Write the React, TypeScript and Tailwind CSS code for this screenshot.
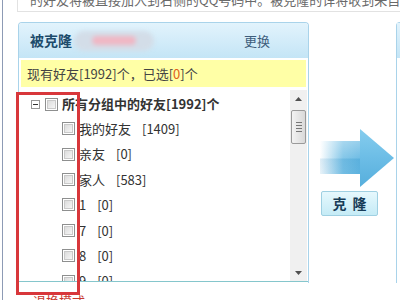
import React from "react";

const items: { name: string; count: string }[] = [
  { name: "我的好友", count: "[1409]" },
  { name: "亲友", count: "[0]" },
  { name: "家人", count: "[583]" },
  { name: "1", count: "[0]" },
  { name: "7", count: "[0]" },
  { name: "8", count: "[0]" },
  { name: "9", count: "[0]" },
];

function CheckBox() {
  return (
    <span className="flex h-[13px] w-[13px] shrink-0 items-center justify-center border border-[#8e8f8f] bg-white">
      <span className="h-[9px] w-[9px] border border-[#c9c9c9] bg-gradient-to-br from-[#dcdcdc] to-[#f6f6f6]" />
    </span>
  );
}

function ScrollBar() {
  return (
    <div className="mt-[2px] mr-[1px] flex w-[17px] shrink-0 flex-col bg-[#f0f0f0]">
      <div className="flex h-[17px] shrink-0 items-center justify-center">
        <svg width="7" height="4" viewBox="0 0 7 4">
          <polygon points="0,4 3.5,0 7,4" fill="#505050" />
        </svg>
      </div>
      <div className="mx-[1px] mt-[3px] flex h-[34px] shrink-0 flex-col items-center justify-center gap-[2px] rounded-[2px] border border-[#9a9a9a] bg-gradient-to-r from-[#f3f3f3] to-[#d9d9d9]">
        <span className="h-px w-[6px] bg-[#777]" />
        <span className="h-px w-[6px] bg-[#777]" />
        <span className="h-px w-[6px] bg-[#777]" />
        <span className="h-px w-[6px] bg-[#777]" />
      </div>
      <div className="flex-1" />
      <div className="flex h-[17px] shrink-0 items-center justify-center">
        <svg width="7" height="4" viewBox="0 0 7 4">
          <polygon points="0,0 3.5,4 7,0" fill="#505050" />
        </svg>
      </div>
    </div>
  );
}

function Arrow() {
  return (
    <svg width="80" height="62" viewBox="0 0 80 62" className="shrink-0">
      <defs>
        <linearGradient id="shaft" x1="0" y1="0" x2="1" y2="0">
          <stop offset="0" stopColor="#62b7e2" stopOpacity="0" />
          <stop offset="0.55" stopColor="#62b7e2" stopOpacity="0.85" />
          <stop offset="1" stopColor="#5fb5e1" />
        </linearGradient>
        <linearGradient id="shade" x1="0" y1="0" x2="0" y2="1">
          <stop offset="0" stopColor="#ffffff" stopOpacity="0.35" />
          <stop offset="0.5" stopColor="#ffffff" stopOpacity="0.1" />
          <stop offset="0.55" stopColor="#2f8cc4" stopOpacity="0.15" />
          <stop offset="1" stopColor="#2f8cc4" stopOpacity="0.1" />
        </linearGradient>
        <linearGradient id="head" x1="0" y1="0" x2="0" y2="1">
          <stop offset="0" stopColor="#86cdee" />
          <stop offset="0.5" stopColor="#6cbde6" />
          <stop offset="1" stopColor="#56aedc" />
        </linearGradient>
      </defs>
      <rect x="2" y="14" width="42" height="33" fill="url(#shaft)" />
      <rect x="2" y="14" width="42" height="33" fill="url(#shade)" />
      <polygon points="42,2 76,31 42,60" fill="url(#head)" />
    </svg>
  );
}

export default function App() {
  return (
    <div
      className="relative h-[300px] w-[400px] overflow-hidden bg-white pl-[2px]"
      style={{ fontFamily: '"Noto Sans CJK SC", "Liberation Sans", sans-serif' }}
    >
      <div className="flex h-full flex-col border-l border-[#8d9bb5]">
        <div className="ml-[14px] h-[12px] shrink-0 overflow-hidden border-b border-l border-[#e2e2e2] pl-[12px]">
          <p className="-mt-[9px] whitespace-nowrap text-[13px] leading-[18px] text-[#6a6a6a]">
            的好友将被直接加入到右侧的QQ号码中。被克隆的详将收到来自
          </p>
        </div>

        <div className="mt-[10px] flex shrink-0">
          {/* left panel */}
          <div className="ml-[15px] flex h-[261px] w-[291px] shrink-0 flex-col rounded-t-[4px] border border-b-0 border-[#a9d3ea]">
            <div className="flex h-[35px] shrink-0 items-center rounded-t-[3px] bg-gradient-to-b from-[#e2f3fc] to-[#c4e5f6] pl-[11px] pr-[38px]">
              <span className="text-[14px] font-bold text-[#1d4b6b]">被克隆</span>
              <span className="ml-[2px] flex h-[20px] w-[80px] items-center justify-center rounded-full bg-[#d3dde8] blur-[2px]">
                <span className="h-[9px] w-[44px] rounded-full bg-[#f0b7c4]" />
              </span>
              <span className="ml-auto text-[13px] text-[#3d5d7c]">更换</span>
            </div>
            <div className="mx-[2px] mt-[2px] flex h-[27px] shrink-0 items-center bg-[#ffffa6] pl-[6px] text-[13px] text-[#444]">
              现有好友[1992]个，已选[<span className="text-[#e0601a]">0</span>]个
            </div>
            <div className="mt-[1px] flex h-[194px] shrink-0 border-b border-[#85c6cc]">
              <div className="flex-1 overflow-hidden pt-[4px] text-[13px] text-[#333]">
                <div className="flex h-[24px] items-center pl-[12px]">
                  <span className="flex h-[9px] w-[9px] items-center justify-center border border-[#979797] bg-white">
                    <span className="h-px w-[5px] bg-[#333]" />
                  </span>
                  <span className="ml-[5px]">
                    <CheckBox />
                  </span>
                  <span className="ml-[4px] font-bold text-[#333]">所有分组中的好友[1992]个</span>
                </div>
                {items.map((it) => (
                  <div key={it.name} className="flex h-[25.4px] items-center pl-[43px]">
                    <CheckBox />
                    <span className="ml-[4px]">{it.name}</span>
                    <span className="ml-[11px]">{it.count}</span>
                  </div>
                ))}
              </div>
              <ScrollBar />
            </div>
          </div>

          {/* arrow + button */}
          <div className="flex w-[87px] shrink-0 flex-col pl-[9px] pt-[105px]">
            <Arrow />
            <button className="ml-[3px] mt-[2px] flex h-[25px] w-[57px] items-center justify-center rounded-[2px] border border-[#9fd0e2] bg-gradient-to-b from-[#e6f8fd] to-[#c5ebf6] text-[14px] font-bold tracking-[6px] text-[#173c57]">
              <span className="pl-[6px]">克隆</span>
            </button>
          </div>

          {/* right panel */}
          <div className="h-[261px] w-[20px] shrink-0 rounded-tl-[4px] border-l border-t border-[#a9d3ea]">
            <div className="h-[35px] bg-gradient-to-b from-[#e2f3fc] to-[#c4e5f6]" />
          </div>
        </div>

        <div className="ml-[30px] mt-[10px] shrink-0 text-[13px] leading-[16px] text-[#c8392f]">退换模式</div>
      </div>

      {/* annotation highlight */}
      <div className="absolute left-[16px] top-[92px] h-[203px] w-[64px] border-[3px] border-[#d8373b]" />
    </div>
  );
}
